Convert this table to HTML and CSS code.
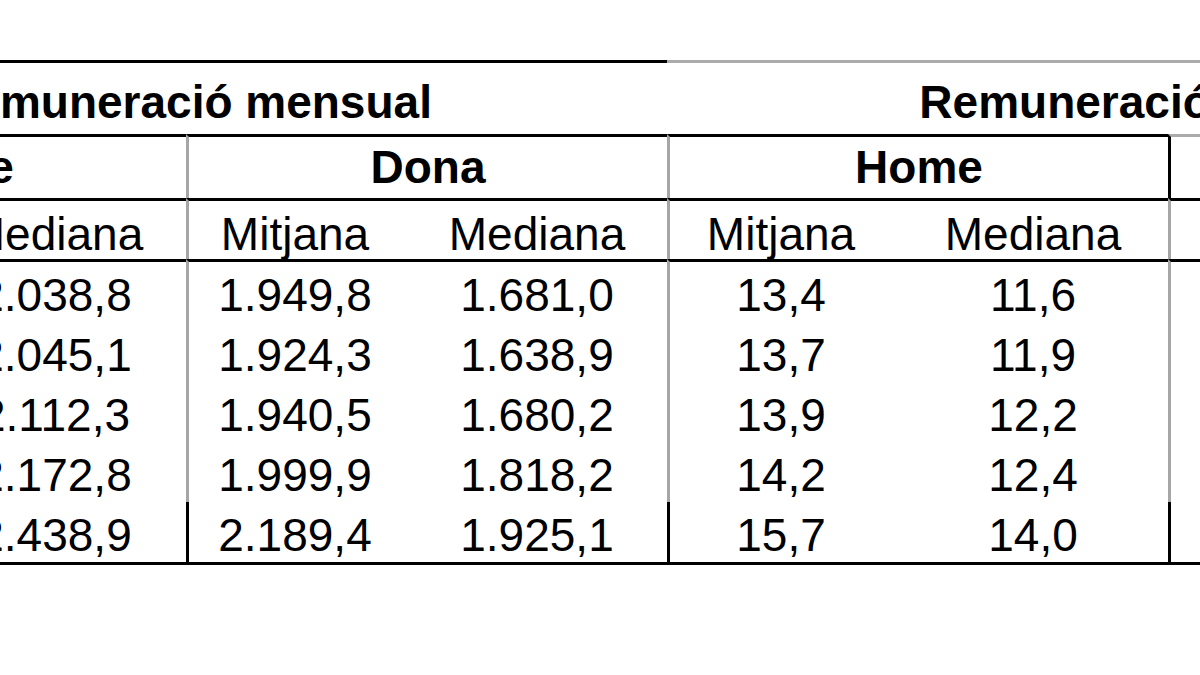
FILE: index.html
```html
<!DOCTYPE html>
<html lang="ca">
<head>
<meta charset="utf-8">
<title>Remuneració mensual</title>
<link rel="stylesheet" href="styles.css">
</head>
<body>
<div class="sheet" role="table">
  <div class="cell title title-a" role="columnheader">Remuneració mensual</div>
  <div class="cell title title-b" role="columnheader">Remuneració per hora</div>

  <div class="cell group span2" role="columnheader">Home</div>
  <div class="cell group span2 sep" role="columnheader">Dona</div>
  <div class="cell group span2 sep" role="columnheader">Home</div>
  <div class="cell group span2 sep-dark top-grey" role="columnheader">Dona</div>

  <div class="cell sub" role="columnheader">Mitjana</div>
  <div class="cell sub" role="columnheader">Mediana</div>
  <div class="cell sub sep" role="columnheader">Mitjana</div>
  <div class="cell sub shift" role="columnheader">Mediana</div>
  <div class="cell sub sep" role="columnheader">Mitjana</div>
  <div class="cell sub shift" role="columnheader">Mediana</div>
  <div class="cell sub sep" role="columnheader">Mitjana</div>
  <div class="cell sub shift" role="columnheader">Mediana</div>

  <div class="cell num first" role="cell"></div>
  <div class="cell num first" role="cell">2.038,8</div>
  <div class="cell num first sep" role="cell">1.949,8</div>
  <div class="cell num first shift" role="cell">1.681,0</div>
  <div class="cell num first sep" role="cell">13,4</div>
  <div class="cell num first shift" role="cell">11,6</div>
  <div class="cell num first sep" role="cell"></div>
  <div class="cell num first shift" role="cell"></div>

  <div class="cell num" role="cell"></div>
  <div class="cell num" role="cell">2.045,1</div>
  <div class="cell num sep" role="cell">1.924,3</div>
  <div class="cell num shift" role="cell">1.638,9</div>
  <div class="cell num sep" role="cell">13,7</div>
  <div class="cell num shift" role="cell">11,9</div>
  <div class="cell num sep" role="cell"></div>
  <div class="cell num shift" role="cell"></div>

  <div class="cell num" role="cell"></div>
  <div class="cell num" role="cell">2.112,3</div>
  <div class="cell num sep" role="cell">1.940,5</div>
  <div class="cell num shift" role="cell">1.680,2</div>
  <div class="cell num sep" role="cell">13,9</div>
  <div class="cell num shift" role="cell">12,2</div>
  <div class="cell num sep" role="cell"></div>
  <div class="cell num shift" role="cell"></div>

  <div class="cell num" role="cell"></div>
  <div class="cell num" role="cell">2.172,8</div>
  <div class="cell num sep" role="cell">1.999,9</div>
  <div class="cell num shift" role="cell">1.818,2</div>
  <div class="cell num sep" role="cell">14,2</div>
  <div class="cell num shift" role="cell">12,4</div>
  <div class="cell num sep" role="cell"></div>
  <div class="cell num shift" role="cell"></div>

  <div class="cell num last" role="cell"></div>
  <div class="cell num last" role="cell">2.438,9</div>
  <div class="cell num last sep-dark" role="cell">2.189,4</div>
  <div class="cell num last shift" role="cell">1.925,1</div>
  <div class="cell num last sep-dark" role="cell">15,7</div>
  <div class="cell num last shift" role="cell">14,0</div>
  <div class="cell num last sep-dark" role="cell"></div>
  <div class="cell num last shift" role="cell"></div>
</div>
</body>
</html>
```

FILE: styles.css
```css
html, body {
  margin: 0;
  padding: 0;
  background: #ffffff;
  overflow: hidden;
}

body {
  width: 1200px;
  height: 675px;
  font-family: "Liberation Sans", Arial, sans-serif;
  color: #000000;
}

.sheet {
  display: grid;
  grid-template-columns: 210px 262px 215px 266px 225px 276px 225px 267px;
  width: 1946px;
  margin-left: -286px;
  margin-top: 60px;
}

.cell {
  box-sizing: border-box;
  font-size: 46px;
  line-height: 50px;
  text-align: center;
  white-space: nowrap;
}

.title {
  grid-column: span 4;
  font-weight: bold;
  padding: 14px 0 7px;
  border-top: 3px solid #000000;
}

.title-a {
  padding-right: 8px;
}

.title-b {
  border-top-color: #ababab;
}

.group {
  font-weight: bold;
  padding: 5px 0 6px;
  border-top: 3px solid #000000;
}

.span2 {
  grid-column: span 2;
}

.top-grey {
  border-top-color: #ababab;
}

.sub {
  padding: 8px 0 0;
  border-top: 3px solid #000000;
}

.num {
  padding: 8px 0 2px;
}

.num.first {
  border-top: 3px solid #000000;
}

.num.last {
  border-bottom: 3px solid #000000;
}

.sep {
  border-left: 3px solid #a6a6a6;
}

.sep-dark {
  border-left: 3px solid #000000;
}

.shift {
  padding-left: 6px;
}
```
